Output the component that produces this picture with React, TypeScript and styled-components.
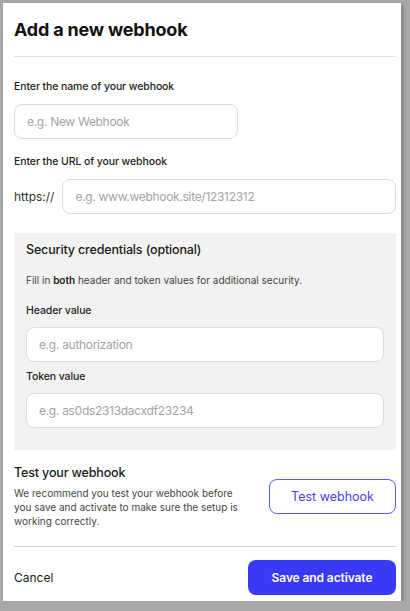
import styled, { createGlobalStyle } from 'styled-components'

const GlobalStyle = createGlobalStyle`
	html, body {
		margin: 0;
		padding: 0;
		background: #a7a7a7;
		font-family: "Inter", "Noto Sans", sans-serif;
		color: #1c1c1c;
	}
	* {
		box-sizing: border-box;
	}
`

const Modal = styled.div`
	width: 398px;
	height: 598px;
	margin: 3px 0 0 3px;
	padding: 15px 5px 6px 11px;
	background: #ffffff;
	box-shadow: 2px 2px 4px rgba(0, 0, 0, 0.25);
	display: flex;
	flex-direction: column;
`
const Title = styled.h1`
	margin: 0 0 14px;
	font-size: 18px;
	line-height: 24px;
	font-weight: 700;
	letter-spacing: -0.2px;
	color: #111;
`
const Divider = styled.hr<{ $tone?: string }>`
	margin: 0;
	border: none;
	height: 1px;
	background: ${p => p.$tone || '#e3e3e3'};
`
const Label = styled.label<{ $top?: number }>`
	display: block;
	margin-top: ${p => p.$top ?? 0}px;
	font-size: 10.5px;
	line-height: 14px;
	font-weight: 500;
	letter-spacing: -0.1px;
	color: #1e1e1e;
`
const Input = styled.input<{ $width?: string; $top?: number }>`
	display: block;
	width: ${p => p.$width || '100%'};
	height: 35px;
	margin-top: ${p => p.$top ?? 9}px;
	padding: 0 12px;
	border: 1px solid #dcdcdc;
	border-radius: 8px;
	background: #fff;
	font-family: inherit;
	font-size: 12px;
	letter-spacing: -0.3px;
	color: #222;
	outline: none;

	&::placeholder {
		color: #a3a3a3;
	}
`
const UrlRow = styled.div`
	display: flex;
	align-items: center;
	gap: 8px;
	margin-top: 10px;

	span {
		font-size: 12px;
		color: #333;
	}
	input {
		flex: 1;
		margin-top: 0;
	}
`
const Credentials = styled.section`
	margin-top: 19px;
	padding: 9px 12px 22px;
	background: #f2f2f2;
`
const SectionTitle = styled.h2`
	margin: 0;
	font-size: 12.5px;
	line-height: 16px;
	font-weight: 500;
	letter-spacing: -0.15px;
	color: #1a1a1a;
`
const Hint = styled.p`
	margin: 15px 0 0;
	font-size: 10px;
	line-height: 14px;
	color: #444;

	b {
		font-weight: 600;
		color: #1a1a1a;
	}
`
const TestRow = styled.div`
	display: flex;
	align-items: center;
	justify-content: space-between;
	margin-top: 15px;
	margin-bottom: 18px;
`
const TestText = styled.div`
	width: 236px;

	p {
		margin: 5px 0 0;
		font-size: 10px;
		line-height: 14px;
		color: #454545;
	}
`
const Button = styled.button`
	height: 35px;
	border-radius: 8px;
	font-family: inherit;
	font-size: 12px;
	cursor: pointer;
`
const OutlineButton = styled(Button)`
	width: 127px;
	border: 1px solid #5a5af2;
	background: #fff;
	color: #4d3fe6;
	font-size: 12.5px;
	font-weight: 400;
`
const PrimaryButton = styled(Button)`
	width: 148px;
	border: none;
	background: #3a3af6;
	color: #fff;
	font-weight: 600;
	letter-spacing: -0.1px;
`
const Footer = styled.div`
	display: flex;
	align-items: center;
	justify-content: space-between;
	margin-top: 13px;
`
const CancelLink = styled.a`
	font-size: 12px;
	color: #1a1a1a;
	cursor: pointer;
`

const App = () => {
	return (
		<>
			<GlobalStyle />
			<Modal>
				<Title>Add a new webhook</Title>
				<Divider />

				<Label $top={23}>Enter the name of your webhook</Label>
				<Input $width="224px" $top={10} placeholder="e.g. New Webhook" />

				<Label $top={16}>Enter the URL of your webhook</Label>
				<UrlRow>
					<span>https://</span>
					<Input placeholder="e.g. www.webhook.site/12312312" />
				</UrlRow>

				<Credentials>
					<SectionTitle>Security credentials (optional)</SectionTitle>
					<Hint>Fill in <b>both</b> header and token values for additional security.</Hint>
					<Label $top={17}>Header value</Label>
					<Input placeholder="e.g. authorization" />
					<Label $top={8}>Token value</Label>
					<Input placeholder="e.g. as0ds2313dacxdf23234" />
				</Credentials>

				<TestRow>
					<TestText>
						<SectionTitle>Test your webhook</SectionTitle>
						<p>We recommend you test your webhook before you save and activate to make sure the setup is working correctly.</p>
					</TestText>
					<OutlineButton>Test webhook</OutlineButton>
				</TestRow>

				<Divider $tone="#cfcfcf" />

				<Footer>
					<CancelLink>Cancel</CancelLink>
					<PrimaryButton>Save and activate</PrimaryButton>
				</Footer>
			</Modal>
		</>
	);
};

export default App;
